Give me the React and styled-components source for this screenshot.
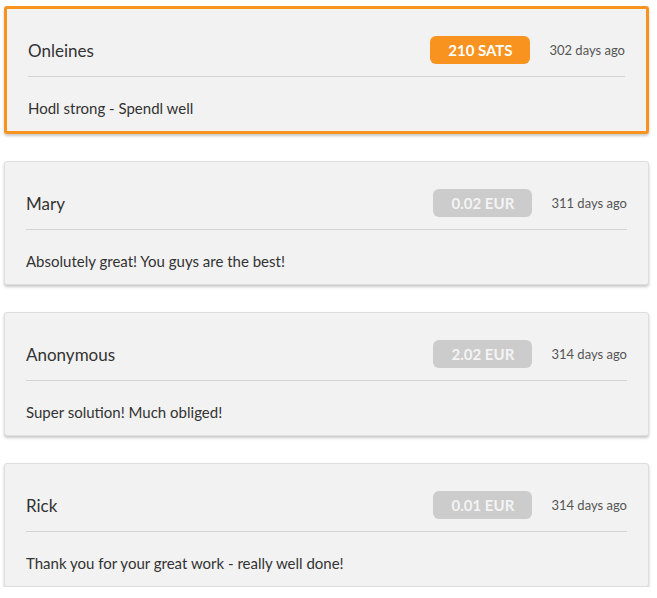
import React from "react";
import styled, { createGlobalStyle } from "styled-components";

const Global = createGlobalStyle`
  html, body { margin: 0; padding: 0; background: #ffffff; }
  body { font-family: Lato, "Open Sans", sans-serif; color: #333; }
`;

const List = styled.div`
  width: 645px;
  padding: 6px 0 0 4px;
  display: flex;
  flex-direction: column;
  gap: 27px;
`;

const Card = styled.div`
  background: #f2f2f2;
  border: ${(p) => (p.$active ? "3px solid #f7931e" : "1px solid #dedede")};
  border-radius: 3px;
  box-shadow: 0 2px 3px rgba(0, 0, 0, 0.22);
  padding: 0 21px;
`;

const Header = styled.div`
  display: flex;
  align-items: center;
  padding: 27px 0 12px;
  border-bottom: 1px solid #d4d4d4;
`;

const Name = styled.div`
  flex: 1;
  font-size: 17px;
  color: #333;
`;

const Badge = styled.div`
  width: ${(p) => (p.$active ? "100px" : "99px")};
  height: 28px;
  border-radius: 6px;
  background: ${(p) => (p.$active ? "#f7931e" : "#cccccc")};
  color: ${(p) => (p.$active ? "#ffffff" : "#f4f4f4")};
  font-size: 15px;
  font-weight: 700;
  display: flex;
  align-items: center;
  justify-content: center;
`;

const Time = styled.div`
  margin-left: 19px;
  white-space: nowrap;
  text-align: right;
  font-size: 13px;
  color: #555;
`;

const Message = styled.div`
  padding: 21px 0 13px;
  line-height: 20px;
  font-size: 15px;
  color: #333;
`;

const items = [
  { name: "Onleines", amount: "210 SATS", time: "302 days ago", msg: "Hodl strong - Spendl well", active: true },
  { name: "Mary", amount: "0.02 EUR", time: "311 days ago", msg: "Absolutely great! You guys are the best!" },
  { name: "Anonymous", amount: "2.02 EUR", time: "314 days ago", msg: "Super solution! Much obliged!" },
  { name: "Rick", amount: "0.01 EUR", time: "314 days ago", msg: "Thank you for your great work - really well done!" },
];

export default function App() {
  return (
    <>
      <Global />
      <List>
        {items.map((it) => (
          <Card key={it.name} $active={it.active}>
            <Header>
              <Name>{it.name}</Name>
              <Badge $active={it.active}>{it.amount}</Badge>
              <Time>{it.time}</Time>
            </Header>
            <Message>{it.msg}</Message>
          </Card>
        ))}
      </List>
    </>
  );
}
